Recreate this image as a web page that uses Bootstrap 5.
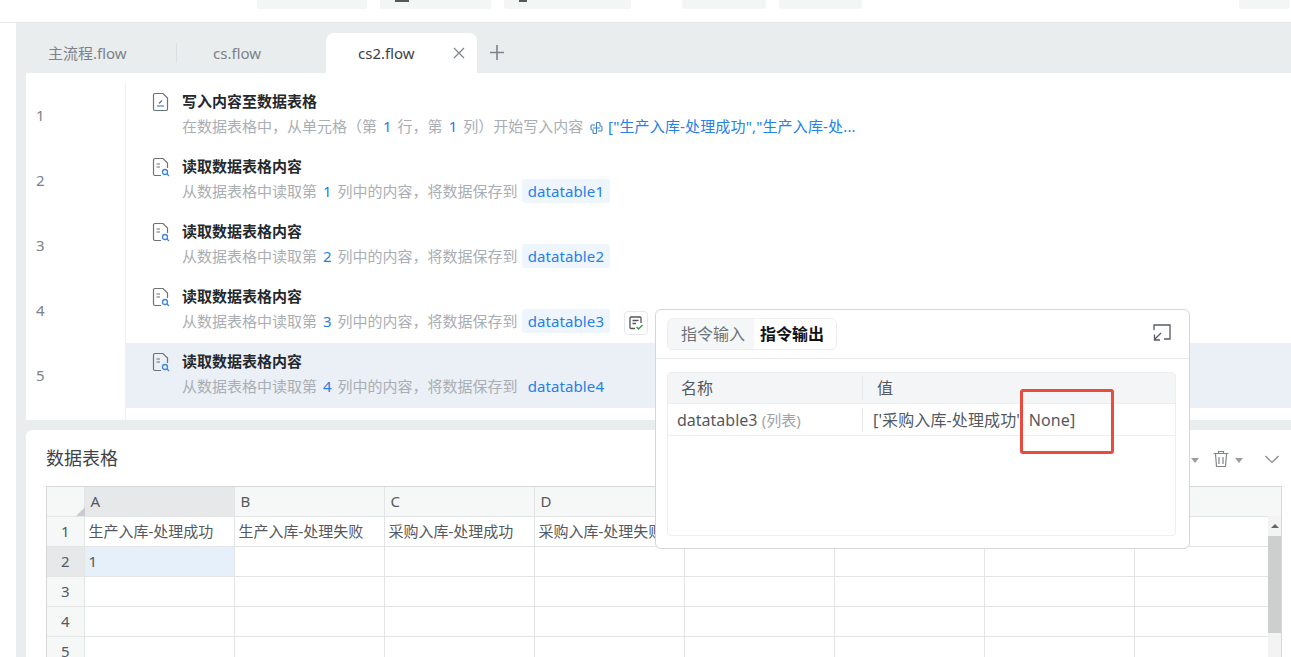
<!DOCTYPE html>
<html lang="zh-CN">

<head>
    <meta charset="UTF-8">
    <meta name="viewport" content="width=device-width, initial-scale=1.0">
    <title>cs2.flow</title>
    <link rel="stylesheet" href="https://cdn.jsdelivr.net/npm/bootstrap@5.3.3/dist/css/bootstrap.min.css">
    <style>
        html, body { height: 657px; overflow: hidden; background: #fff; }
        body { font-family: "Noto Sans", "Noto Sans CJK SC", sans-serif; font-size: 15px; color: #333; position: relative; }
        .top-strip { height: 23px; padding-left: 257px; border-bottom: 1px solid #e8e8e8; gap: 13px; }
        .ghost-btn { height: 9px; background: #f4f5f5; border-radius: 0 0 3px 3px; }
        .ghost-mark { width: 14px; height: 2px; background: #55595e; margin-left: 15px; }
        .work-area { margin-left: 16px; background: #e9edee; height: 634px; }
        .tab-bar { height: 50px; padding-top: 10px; padding-left: 10px; }
        .flow-tab { height: 40px; width: 150px; padding-left: 22px; color: #7c8288; font-size: 15px; line-height: 40px; position: relative; }
        .flow-tab.second { padding-left: 36px; border-left: 1px solid #dcdfe1; height: 20px; line-height: 20px; margin-top: 10px; width: 150px; }
        .flow-tab.current { background: #fff; color: #3c4046; border-radius: 8px 8px 0 0; width: 151px; padding-left: 32px; display: flex; justify-content: space-between; padding-right: 12px; }
        .tab-plus { margin-left: 12px; margin-top: 9px; }
        .flow-body { margin-left: 10px; background: #fff; height: 347px; padding-top: 10px; }
        .num-col { width: 100px; border-right: 1px solid #eef0f1; color: #7c8288; font-size: 15px; padding-bottom: 12px; }
        .num-cell { height: 65px; padding-left: 10px; display: flex; align-items: center; }
        .step-row { height: 65px; padding: 8px 0 0 26px; }
        .step-row.picked { background: #ebeff6; }
        .step-icon { width: 18px; height: 20px; margin-right: 12px; flex: none; margin-top: 1px; }
        .step-title { font-size: 15px; font-weight: 700; color: #25282c; line-height: 20px; }
        .step-desc { font-size: 15px; color: #a9aeb4; line-height: 24px; margin-top: 3px; white-space: nowrap; }
        .blue-text { color: #2680e6; }
        .step-desc .blue-text { margin: 0 6px; }
        .step-desc .json-text { margin: 0; letter-spacing: .16px; }
        .py-mark { margin: 0 1px 0 3px; }
        .var-chip { color: #2680e6; background: #eef5fd; border-radius: 3px; padding: 2px 6px; margin-left: 4px; font-size: 15px; letter-spacing: .1px; }
        .step-row.picked .var-chip { background: transparent; }
        .check-btn { width: 24px; height: 24px; border: 1px solid #e6e8ea; border-radius: 4px; margin-left: 14px; display: inline-flex; align-items: center; justify-content: center; vertical-align: middle; background: #fff; }
        .sheet-panel { margin: 10px 0 0 10px; background: #fff; border-radius: 6px 0 0 0; height: 227px; padding: 16px 9px 0 20px; }
        .sheet-head { height: 40px; }
        .sheet-name { font-size: 18px; color: #40444a; line-height: 24px; }
        .sheet-tools { gap: 5px; color: #8a8f95; margin-right: 2px; }
        .tool-caret { width: 0; height: 0; border: 4px solid transparent; border-top: 5px solid #9a9ea3; border-bottom: 0; }
        .grid-wrap { border: 1px solid #d5d7d9; border-bottom: 0; position: relative; height: 171px; overflow: hidden; }
        .sheet-grid { border-collapse: collapse; table-layout: fixed; width: 1235px; font-size: 15px; color: #55595e; }
        .sheet-grid th, .sheet-grid td { height: 30px; border: 1px solid #e3e4e6; padding: 0 4px; font-weight: 400; white-space: nowrap; overflow: hidden; }
        .sheet-grid th:first-child, .sheet-grid td:first-child { border-left: 0; }
        .sheet-grid thead th { height: 29px; background: #f6f7f7; padding-left: 6px; border-top: 0; border-left: 1px solid #e3e4e6; }
        .sheet-grid thead th.on { background: #e6e8ea; }
        .sheet-grid .row-no { background: #f6f7f7; text-align: center; padding: 0; color: #55595e; }
        .sheet-grid .row-no.on { background: #e6e8ea; }
        .sheet-grid td.on { background: #e6f0fb; }
        .corner-mark { position: absolute; left: 29px; top: 20px; width: 0; height: 0; border-style: solid; border-width: 0 0 9px 9px; border-color: transparent transparent #c9cbce transparent; }
        .v-scroll { position: absolute; right: 0; top: 29px; bottom: 0; width: 13px; background: #f3f3f3; }
        .v-scroll .thumb { margin-top: 20px; height: 97px; background: #cdcfcf; }
        .v-scroll .arrow { position: absolute; left: 3px; top: 8px; border: 4px solid transparent; border-bottom: 4px solid #666; border-top: 0; }
        .output-pop { position: absolute; left: 655px; top: 309px; width: 535px; height: 240px; background: #fff; border: 1px solid #d4d6d8; border-radius: 6px; }
        .pop-head { height: 49px; border-bottom: 1px solid #e8eaec; padding: 8px 17px 0 11px; }
        .seg-box { height: 32px; width: 170px; background: #f5f6f7; border: 1px solid #eceef0; border-radius: 6px; font-size: 16px; overflow: hidden; }
        .seg-item { padding: 0 9px 0 13px; line-height: 30px; color: #6d7278; white-space: nowrap; }
        .seg-item.active { background: #fff; color: #111; font-weight: 700; padding: 0 6px; flex: 1; }
        .out-table { margin: 13px 13px 0 11px; height: 164px; border: 1px solid #eceef0; border-radius: 4px; }
        .out-row { height: 32px; border-bottom: 1px solid #eceef0; }
        .out-row.header { height: 31px; background: #f4f5f7; color: #55595e; font-size: 16px; }
        .out-name { width: 195px; padding-left: 9px; border-right: 1px solid #e6e8ea; font-size: 16px; color: #55595e; white-space: nowrap; }
        .out-row.header .out-name { padding-left: 13px; }
        .out-val { padding-left: 10px; font-size: 16px; color: #55595e; white-space: nowrap; letter-spacing: .12px; }
        .out-row.header .out-val { padding-left: 14px; }
        .type-hint { color: #a0a4a9; font-size: 15px; }
        .red-frame { position: absolute; left: 1020px; top: 389px; width: 94px; height: 65px; border: 3px solid #ea4b3f; border-radius: 3px; }
    </style>
</head>

<body>
    <svg class="d-none">
        <symbol id="read-doc" viewBox="0 0 18 20">
            <path d="M15.500 11 V6 L11 1.500 H3 A1.500 1.500 0 0 0 1.500 3 V17 A1.500 1.500 0 0 0 3 18.500 H9" fill="none" stroke="#6d7278" stroke-width="1.200"/>
            <path d="M4.500 7 H8 M4.500 10 H8" stroke="#6d7278" stroke-width="1.200"/>
            <circle cx="13" cy="15" r="2.500" fill="none" stroke="#3f84d8" stroke-width="1.300"/>
            <path d="M15 17 L17 19" stroke="#3f84d8" stroke-width="1.300"/>
        </symbol>
    </svg>

    <div class="top-strip d-flex">
        <div class="ghost-btn" style="width:110px"></div>
        <div class="ghost-btn" style="width:111px"><div class="ghost-mark"></div></div>
        <div class="ghost-btn" style="width:127px"><div class="ghost-mark" style="width:8px"></div></div>
        <div class="ghost-btn" style="width:84px;margin-left:38px"></div>
        <div class="ghost-btn" style="width:83px"></div>
        <div class="ghost-btn" style="width:51px;margin-left:364px"></div>
    </div>

    <div class="work-area">
        <div class="tab-bar d-flex">
            <div class="flow-tab">主流程.flow</div>
            <div class="flow-tab second">cs.flow</div>
            <div class="flow-tab current">
                <span>cs2.flow</span>
                <svg width="12" height="40" viewBox="0 0 12 40"><path d="M1 15 L11 25 M11 15 L1 25" stroke="#80858a" stroke-width="1.200" fill="none"/></svg>
            </div>
            <svg class="tab-plus" width="16" height="20" viewBox="0 0 16 20"><path d="M8 3 V18 M1 10.500 H15" stroke="#7c8288" stroke-width="1.600" fill="none"/></svg>
        </div>

        <div class="flow-body d-flex">
            <div class="num-col flex-shrink-0">
                <div class="num-cell">1</div>
                <div class="num-cell">2</div>
                <div class="num-cell">3</div>
                <div class="num-cell">4</div>
                <div class="num-cell">5</div>
            </div>
            <div class="flex-grow-1">
                <div class="step-row d-flex">
                    <svg class="step-icon" viewBox="0 0 18 20"><path d="M3 1.500 H11 L15.500 6 V17 A1.500 1.500 0 0 1 14 18.500 H3 A1.500 1.500 0 0 1 1.500 17 V3 A1.500 1.500 0 0 1 3 1.500 Z" fill="none" stroke="#6d7278" stroke-width="1.200"/><path d="M5 14 H12" stroke="#3f84d8" stroke-width="1.200"/><path d="M7 11.500 L10 8.500" stroke="#6d7278" stroke-width="1.200"/></svg>
                    <div>
                        <div class="step-title">写入内容至数据表格</div>
                        <div class="step-desc">在数据表格中，从单元格（第<span class="blue-text">1</span>行，第<span class="blue-text">1</span>列）开始写入内容
                            <svg class="py-mark align-middle" width="13" height="14" viewBox="0 0 13 14"><path d="M6.500 1.500 H9 A1 1 0 0 1 10 2.500 V5 H11 A1 1 0 0 1 12 6 V9 A1 1 0 0 1 11 10 H8 M6.500 12.500 H4 A1 1 0 0 1 3 11.500 V9 H2 A1 1 0 0 1 1 8 V5 A1 1 0 0 1 2 4 H5 M3 7 H10 M6.500 1.500 V12.500" fill="none" stroke="#3f84d8" stroke-width="1.100"/></svg>
                            <span class="blue-text json-text">["生产入库-处理成功","生产入库-处...</span></div>
                    </div>
                </div>
                <div class="step-row d-flex">
                    <svg class="step-icon"><use href="#read-doc"/></svg>
                    <div>
                        <div class="step-title">读取数据表格内容</div>
                        <div class="step-desc">从数据表格中读取第<span class="blue-text">1</span>列中的内容，将数据保存到<span class="var-chip">datatable1</span></div>
                    </div>
                </div>
                <div class="step-row d-flex">
                    <svg class="step-icon"><use href="#read-doc"/></svg>
                    <div>
                        <div class="step-title">读取数据表格内容</div>
                        <div class="step-desc">从数据表格中读取第<span class="blue-text">2</span>列中的内容，将数据保存到<span class="var-chip">datatable2</span></div>
                    </div>
                </div>
                <div class="step-row d-flex">
                    <svg class="step-icon"><use href="#read-doc"/></svg>
                    <div>
                        <div class="step-title">读取数据表格内容</div>
                        <div class="step-desc">从数据表格中读取第<span class="blue-text">3</span>列中的内容，将数据保存到<span class="var-chip">datatable3</span><span class="check-btn"><svg width="16" height="16" viewBox="0 0 16 16"><path d="M7 13.500 H3 A1 1 0 0 1 2 12.500 V3 A1 1 0 0 1 3 2 H12 A1 1 0 0 1 13 3 V8" fill="none" stroke="#555" stroke-width="1.300"/><path d="M4.500 5.500 H10.500 M4.500 8.500 H8" stroke="#555" stroke-width="1.300"/><path d="M8.500 12 L10.500 14 L14.500 10" fill="none" stroke="#35a04a" stroke-width="1.500"/></svg></span></div>
                    </div>
                </div>
                <div class="step-row picked d-flex">
                    <svg class="step-icon"><use href="#read-doc"/></svg>
                    <div>
                        <div class="step-title">读取数据表格内容</div>
                        <div class="step-desc">从数据表格中读取第<span class="blue-text">4</span>列中的内容，将数据保存到<span class="var-chip">datatable4</span></div>
                    </div>
                </div>
            </div>
        </div>

        <div class="sheet-panel">
            <div class="sheet-head d-flex justify-content-between">
                <div class="sheet-name">数据表格</div>
                <div class="sheet-tools d-flex align-items-start pt-1">
                    <span class="tool-caret mt-2"></span>
                    <svg class="ms-2" width="18" height="18" viewBox="0 0 18 18"><path d="M1.500 3.500 H16.500 M6.500 3 V1.500 H11.500 V3 M3.500 4 L4.500 16.500 H13.500 L14.500 4 M7 7 V14 M11 7 V14" fill="none" stroke="#80858a" stroke-width="1.200"/></svg>
                    <span class="tool-caret mt-2"></span>
                    <svg class="ms-3" width="16" height="18" viewBox="0 0 16 18"><path d="M1.500 6 L8 12.500 L14.500 6" fill="none" stroke="#80858a" stroke-width="1.200"/></svg>
                </div>
            </div>
            <div class="grid-wrap">
                <table class="sheet-grid">
                    <colgroup><col style="width:37px"><col style="width:150px"><col style="width:150px"><col style="width:150px"><col style="width:150px"><col style="width:150px"><col style="width:150px"><col style="width:150px"><col></colgroup>
                    <thead>
                        <tr><th></th><th class="on">A</th><th>B</th><th>C</th><th>D</th><th></th><th></th><th></th><th></th></tr>
                    </thead>
                    <tbody>
                        <tr><td class="row-no">1</td><td>生产入库-处理成功</td><td>生产入库-处理失败</td><td>采购入库-处理成功</td><td>采购入库-处理失败</td><td></td><td></td><td></td><td></td></tr>
                        <tr><td class="row-no on">2</td><td class="on">1</td><td></td><td></td><td></td><td></td><td></td><td></td><td></td></tr>
                        <tr><td class="row-no">3</td><td></td><td></td><td></td><td></td><td></td><td></td><td></td><td></td></tr>
                        <tr><td class="row-no">4</td><td></td><td></td><td></td><td></td><td></td><td></td><td></td><td></td></tr>
                        <tr><td class="row-no">5</td><td></td><td></td><td></td><td></td><td></td><td></td><td></td><td></td></tr>
                    </tbody>
                </table>
                <div class="corner-mark"></div>
                <div class="v-scroll"><span class="arrow"></span><div class="thumb"></div></div>
            </div>
        </div>
    </div>

    <div class="output-pop">
        <div class="pop-head d-flex justify-content-between">
            <div class="seg-box d-flex">
                <div class="seg-item">指令输入</div>
                <div class="seg-item active">指令输出</div>
            </div>
            <svg class="mt-1" width="20" height="20" viewBox="0 0 20 20"><path d="M2 8 V3 H18 V17 H12 M2 18 L9 11 M2.500 12.500 V18 H8" fill="none" stroke="#555a60" stroke-width="1.300"/></svg>
        </div>
        <div class="out-table">
            <div class="out-row header d-flex align-items-center">
                <div class="out-name">名称</div>
                <div class="out-val">值</div>
            </div>
            <div class="out-row d-flex align-items-center">
                <div class="out-name">datatable3 <span class="type-hint">(列表)</span></div>
                <div class="out-val">['采购入库-处理成功', None]</div>
            </div>
        </div>
    </div>
    <div class="red-frame"></div>

    <script src="https://cdn.jsdelivr.net/npm/bootstrap@5.3.3/dist/js/bootstrap.bundle.min.js"></script>
</body>

</html>
